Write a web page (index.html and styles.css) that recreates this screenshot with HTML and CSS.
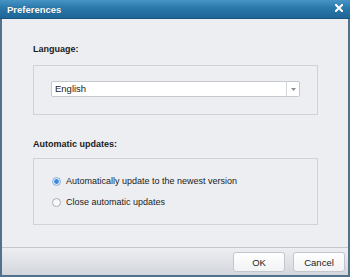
FILE: index.html
```html
<!DOCTYPE html>
<html>
<head>
<meta charset="utf-8">
<link rel="stylesheet" href="styles.css">
</head>
<body>
<div class="window">
  <div class="titlebar">
    <span class="title">Preferences</span>
    <svg class="close" width="8" height="8" viewBox="0 0 8 8"><path d="M1 1 L7 7 M7 1 L1 7" stroke="#fff" stroke-width="2" stroke-linecap="square"/></svg>
  </div>
  <div class="content">
    <div class="label first">Language:</div>
    <div class="group g1">
      <div class="select">
        <span class="value">English</span>
        <span class="arrow"><svg width="5" height="3" viewBox="0 0 5 3"><path d="M0 0 H5 L2.5 3 Z" fill="#8a8e94"/></svg></span>
      </div>
    </div>
    <div class="label second">Automatic updates:</div>
    <div class="group g2">
      <div class="radio-row"><span class="radio checked"></span><span>Automatically update to the newest version</span></div>
      <div class="radio-row"><span class="radio"></span><span>Close automatic updates</span></div>
    </div>
  </div>
  <div class="footer">
    <button class="btn">OK</button>
    <button class="btn">Cancel</button>
  </div>
</div>
</body>
</html>
```
FILE: styles.css
```css
* { box-sizing: border-box; }
html, body { margin: 0; padding: 0; }
body { width: 350px; height: 277px; overflow: hidden; font-family: "Liberation Sans", Arial, sans-serif; font-size: 9px; color: #1b1b1b; }
.window { width: 350px; height: 277px; display: flex; flex-direction: column; background: #eceef2; border: 2px solid #50728a; border-top: none; }
.titlebar { height: 19px; margin: 0 -2px; flex: none; display: flex; align-items: center; justify-content: space-between; padding: 0 7px 0 7px; background: linear-gradient(#4693c6, #2a77a9 45%, #1d6697); border-bottom: 1px solid #17557f; }
.title { color: #fff; font-weight: bold; font-size: 9.5px; text-shadow: 0 0 1px rgba(0,0,0,0.3); }
.close { display: block; margin-top: -3px; }
.content { flex: 1; padding: 24px 30px 0 31px; }
.label { font-weight: bold; height: 12px; line-height: 12px; }
.label.first { margin-bottom: 10px; }
.label.second { margin-top: 23px; margin-bottom: 8px; }
.group { border: 1px solid #cfd2d6; background: #eceef2; }
.g1 { height: 50px; padding: 15px 17px 0 17px; }
.g2 { height: 67px; padding: 15px 17px 0 18px; }
.select { height: 16px; background: #fff; border: 1px solid #c6c9cd; border-radius: 2px; display: flex; align-items: center; }
.value { flex: 1; padding-left: 3px; line-height: 14px; font-size: 9.5px; }
.arrow { width: 13px; height: 14px; border-left: 1px solid #d3d6da; display: flex; align-items: center; justify-content: center; }
.arrow svg { display: block; }
.radio-row { height: 14px; display: flex; align-items: center; gap: 5px; margin-bottom: 7px; }
.radio { width: 9px; height: 9px; border-radius: 50%; border: 1px solid #a9adb3; background: linear-gradient(#f4f5f7, #fff); flex: none; }
.radio.checked { border-color: #8fb2d6; background: radial-gradient(circle, #3a8ae0 0 2px, #d6e6f6 2.5px); }
.footer { height: 28px; flex: none; border-top: 1px solid #c4c8ce; background: linear-gradient(#eceef2, #d3d6dc); display: flex; justify-content: flex-end; align-items: flex-start; padding: 4px 3px 0 0; gap: 8px; margin-bottom: 0; }
.btn { width: 52px; height: 20px; font-family: "Liberation Sans", Arial, sans-serif; font-size: 9.5px; color: #222; background: linear-gradient(#ffffff, #f1f2f4); border: 1px solid #c3c6cb; border-radius: 3px; padding: 0; }
```
